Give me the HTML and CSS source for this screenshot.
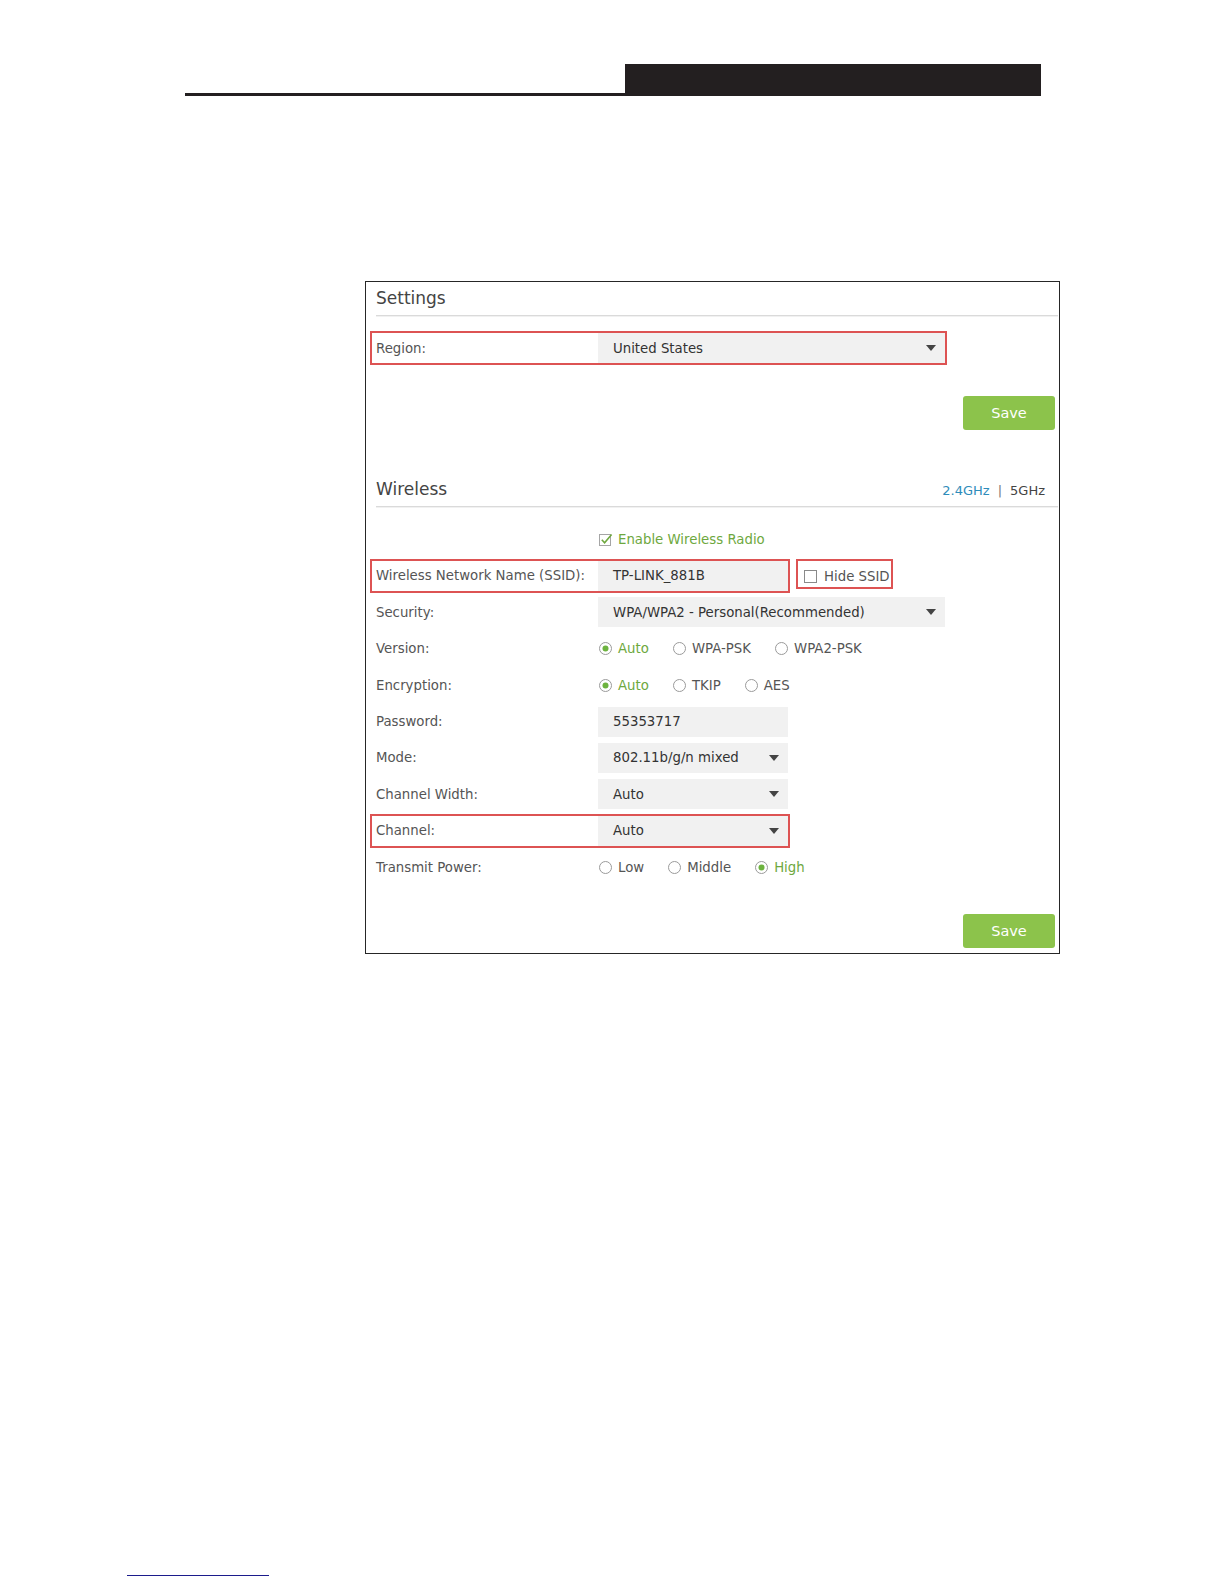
FILE: index.html
```html
<!DOCTYPE html>
<html lang="en">
<head>
<meta charset="utf-8">
<title>Wireless Settings</title>
<link rel="stylesheet" href="styles.css">
</head>
<body>
<div class="page">
  <header class="doc-head">
    <div class="head-rule"></div>
    <div class="head-box"></div>
  </header>

  <div class="panel">
    <section class="block">
      <div class="block-head"><h2>Settings</h2></div>
      <div class="settings-body">
        <div class="row hl">
          <span class="label">Region:</span>
          <div class="field select long">United States</div>
        </div>
      </div>
      <div class="actions first"><button class="save">Save</button></div>
    </section>

    <section class="block wireless">
      <div class="block-head">
        <h2>Wireless</h2>
        <div class="bands"><span class="active">2.4GHz</span><span class="bar">|</span><span>5GHz</span></div>
      </div>
      <div class="form">
        <div class="row">
          <span class="label"></span>
          <span class="check on">
            <svg width="14" height="14" viewBox="0 0 14 14"><rect x="0.5" y="1.5" width="11" height="11" fill="#fff" stroke="#a5a5a5"/><path d="M2.8 6.8 L5.6 9.8 L12.6 1.6" fill="none" stroke="#6ea83e" stroke-width="1.6"/></svg>
            <span class="green">Enable Wireless Radio</span>
          </span>
        </div>
        <div class="row">
          <div class="row hl">
            <span class="label">Wireless Network Name (SSID):</span>
            <div class="field short">TP-LINK_881B</div>
          </div>
          <div class="hide hl">
            <svg width="13" height="13" viewBox="0 0 13 13"><rect x="0.5" y="0.5" width="12" height="12" fill="#fff" stroke="#8a8a8a"/></svg>
            <span>Hide SSID</span>
          </div>
        </div>
        <div class="row">
          <span class="label">Security:</span>
          <div class="field select long">WPA/WPA2 - Personal(Recommended)</div>
        </div>
        <div class="row">
          <span class="label">Version:</span>
          <div class="radios">
            <span class="radio on"><svg width="13" height="13" viewBox="0 0 13 13"><circle cx="6.5" cy="6.5" r="6" fill="#fff" stroke="#9a9a9a"/><circle cx="6.5" cy="6.5" r="3" fill="#6db33f"/></svg><span>Auto</span></span>
            <span class="radio"><svg width="13" height="13" viewBox="0 0 13 13"><circle cx="6.5" cy="6.5" r="6" fill="#fff" stroke="#9a9a9a"/></svg><span>WPA-PSK</span></span>
            <span class="radio"><svg width="13" height="13" viewBox="0 0 13 13"><circle cx="6.5" cy="6.5" r="6" fill="#fff" stroke="#9a9a9a"/></svg><span>WPA2-PSK</span></span>
          </div>
        </div>
        <div class="row">
          <span class="label">Encryption:</span>
          <div class="radios">
            <span class="radio on"><svg width="13" height="13" viewBox="0 0 13 13"><circle cx="6.5" cy="6.5" r="6" fill="#fff" stroke="#9a9a9a"/><circle cx="6.5" cy="6.5" r="3" fill="#6db33f"/></svg><span>Auto</span></span>
            <span class="radio"><svg width="13" height="13" viewBox="0 0 13 13"><circle cx="6.5" cy="6.5" r="6" fill="#fff" stroke="#9a9a9a"/></svg><span>TKIP</span></span>
            <span class="radio"><svg width="13" height="13" viewBox="0 0 13 13"><circle cx="6.5" cy="6.5" r="6" fill="#fff" stroke="#9a9a9a"/></svg><span>AES</span></span>
          </div>
        </div>
        <div class="row">
          <span class="label">Password:</span>
          <div class="field short">55353717</div>
        </div>
        <div class="row">
          <span class="label">Mode:</span>
          <div class="field select short">802.11b/g/n mixed</div>
        </div>
        <div class="row">
          <span class="label">Channel Width:</span>
          <div class="field select short">Auto</div>
        </div>
        <div class="row hl">
          <span class="label">Channel:</span>
          <div class="field select short">Auto</div>
        </div>
        <div class="row">
          <span class="label">Transmit Power:</span>
          <div class="radios">
            <span class="radio"><svg width="13" height="13" viewBox="0 0 13 13"><circle cx="6.5" cy="6.5" r="6" fill="#fff" stroke="#9a9a9a"/></svg><span>Low</span></span>
            <span class="radio"><svg width="13" height="13" viewBox="0 0 13 13"><circle cx="6.5" cy="6.5" r="6" fill="#fff" stroke="#9a9a9a"/></svg><span>Middle</span></span>
            <span class="radio on"><svg width="13" height="13" viewBox="0 0 13 13"><circle cx="6.5" cy="6.5" r="6" fill="#fff" stroke="#9a9a9a"/><circle cx="6.5" cy="6.5" r="3" fill="#6db33f"/></svg><span>High</span></span>
          </div>
        </div>
      </div>
      <div class="actions last"><button class="save">Save</button></div>
    </section>
  </div>

  <div class="foot-rule"></div>
</div>
</body>
</html>
```

FILE: styles.css
```css
html, body {
  margin: 0;
  background: #fff;
}

body {
  font-family: "DejaVu Sans", Verdana, sans-serif;
  font-size: 13.3px;
  color: #555;
}

.page {
  padding-top: 64px;
}

/* document header */
.doc-head {
  display: flex;
  align-items: flex-end;
  margin-left: 185px;
  width: 856px;
  height: 32px;
}

.head-rule {
  flex: 1;
  height: 3px;
  background: #231f20;
}

.head-box {
  width: 416px;
  height: 32px;
  background: #231f20;
}

/* panel */
.panel {
  margin: 185px 0 0 365px;
  width: 695px;
  box-sizing: border-box;
  border: 1px solid #262626;
  padding: 3px 1px 5px 10px;
}

.block-head {
  display: flex;
  align-items: baseline;
  justify-content: space-between;
  padding-bottom: 4px;
  border-bottom: 1px solid #dadada;
  box-shadow: 0 1px 0 #f1f1f1;
}

.block-head h2 {
  margin: 0;
  font-size: 17px;
  line-height: 26px;
  font-weight: normal;
  color: #444;
}

.bands {
  padding-right: 13px;
  font-size: 13px;
  color: #444;
}

.bands .active {
  color: #2e8cba;
}

.bands .bar {
  margin: 0 8px;
  color: #777;
}

.settings-body {
  padding-top: 17px;
  margin-left: -4px;
}

.wireless {
  margin-top: 46px;
}

.form {
  margin: 17.6px 0 0 -4px;
  display: grid;
  grid-auto-rows: 30px;
  row-gap: 6.4px;
}

.row {
  display: flex;
  align-items: center;
  height: 30px;
}

.hl {
  outline: 2px solid #dd5353;
  width: fit-content;
  justify-self: start;
}

.label {
  flex: none;
  width: 226px;
  box-sizing: border-box;
  padding-left: 4px;
  white-space: nowrap;
}

.field {
  position: relative;
  flex: none;
  height: 30px;
  box-sizing: border-box;
  padding-left: 15px;
  display: flex;
  align-items: center;
  background: #f1f1f1;
  color: #333;
  white-space: nowrap;
}

.long {
  width: 347px;
}

.short {
  width: 190px;
}

.select::after {
  content: "";
  position: absolute;
  right: 9px;
  top: 50%;
  margin-top: -3px;
  border-left: 5px solid transparent;
  border-right: 5px solid transparent;
  border-top: 6px solid #444;
}

.check {
  display: flex;
  align-items: center;
  gap: 5px;
  margin-left: 1px;
}

.green,
.radio.on span {
  color: #6ea83e;
}

.hide {
  display: flex;
  align-items: center;
  gap: 7px;
  align-self: flex-start;
  margin-left: 10px;
  width: 93px;
  height: 26px;
  box-sizing: border-box;
  padding: 5px 0 0 6px;
  color: #555;
}

.radios {
  display: flex;
  align-items: center;
  margin-left: 1px;
}

.radio {
  display: flex;
  align-items: center;
  gap: 6px;
  margin-right: 24px;
}

.radio svg,
.check svg,
.hide svg {
  flex: none;
  display: block;
}

/* buttons */
.actions {
  display: flex;
  justify-content: flex-end;
  padding-right: 3px;
}

.actions.first {
  margin-top: 33px;
}

.actions.last {
  margin-top: 31.8px;
}

.save {
  width: 92px;
  height: 34px;
  border: 0;
  border-radius: 3px;
  background: #8cc34b;
  color: #fff;
  font-family: "DejaVu Sans", Verdana, sans-serif;
  font-size: 14.5px;
  padding: 0;
}

.foot-rule {
  margin: 621px 0 0 127px;
  width: 142px;
  height: 1px;
  background: #1c1c8c;
}
```
